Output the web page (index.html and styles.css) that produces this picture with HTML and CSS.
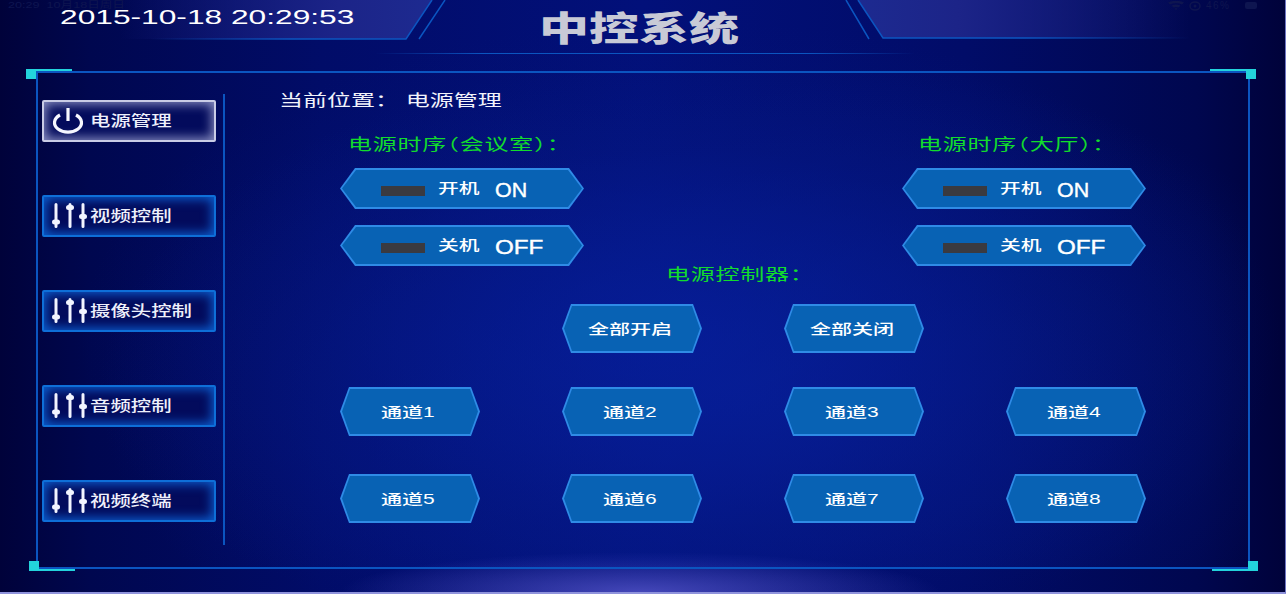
FILE: index.html
```html
<!DOCTYPE html>
<html lang="zh">
<head>
<meta charset="utf-8">
<title>中控系统</title>
<link rel="stylesheet" href="styles.css">
</head>
<body>
<svg class="defs" width="0" height="0" aria-hidden="true">
  <symbol id="sliders" viewBox="0 0 36 26">
    <path d="M4 1.500V23.500M18 1.500V23.500M31 1.500V23.500" stroke="#f2f4ff" stroke-width="3" stroke-linecap="round" fill="none"/>
    <rect x="0" y="16.500" width="8" height="5" rx="2.500" fill="#f2f4ff"/>
    <rect x="14" y="2" width="8" height="5" rx="2.500" fill="#f2f4ff"/>
    <rect x="27" y="11" width="8" height="5" rx="2.500" fill="#f2f4ff"/>
  </symbol>
</svg>
<div class="glow"></div>
<svg class="deco" width="1286" height="60" viewBox="0 0 1286 60" aria-hidden="true">
  <defs>
    <linearGradient id="lt" x1="0" x2="1" y1="0" y2="0">
      <stop offset="0" stop-color="#1c2488" stop-opacity="0"/>
      <stop offset="0.7" stop-color="#1c2488"/>
      <stop offset="1" stop-color="#1d2a90"/>
    </linearGradient>
    <linearGradient id="rt" x1="1" x2="0" y1="0" y2="0">
      <stop offset="0" stop-color="#1c2488" stop-opacity="0"/>
      <stop offset="0.7" stop-color="#1c2488"/>
      <stop offset="1" stop-color="#1d2a90"/>
    </linearGradient>
    <linearGradient id="ll" x1="0" x2="1" y1="0" y2="0">
      <stop offset="0" stop-color="#0b55c0" stop-opacity="0"/>
      <stop offset="0.5" stop-color="#0b55c0"/>
      <stop offset="1" stop-color="#0b55c0"/>
    </linearGradient>
    <linearGradient id="lr" x1="1" x2="0" y1="0" y2="0">
      <stop offset="0" stop-color="#0b55c0" stop-opacity="0"/>
      <stop offset="0.5" stop-color="#0b55c0"/>
      <stop offset="1" stop-color="#0b55c0"/>
    </linearGradient>
    <linearGradient id="lm" x1="0" x2="1" y1="0" y2="0">
      <stop offset="0" stop-color="#0b55c0" stop-opacity="0"/>
      <stop offset="0.2" stop-color="#0b55c0"/>
      <stop offset="0.8" stop-color="#0b55c0"/>
      <stop offset="1" stop-color="#0b55c0" stop-opacity="0"/>
    </linearGradient>
  </defs>
  <polygon points="120,0 432,0 406,39 120,39" fill="url(#lt)"/>
  <polygon points="858,0 1190,0 1190,38 883,38" fill="url(#rt)"/>
  <path d="M150 39H406L432 0" fill="none" stroke="url(#ll)" stroke-width="1.5"/>
  <path d="M858 0L883 38H1190" fill="none" stroke="url(#lr)" stroke-width="1.5"/>
  <path d="M419 39L445 0M846 0L869 39" fill="none" stroke="#0b55c0" stroke-width="1.5"/>
  <rect x="375" y="53" width="540" height="1" fill="url(#lm)"/>
</svg>
<div class="status status-left"><span class="st-text">20:29&nbsp;&nbsp;10月18日周日</span></div>
<div class="status status-right">
  <svg width="16" height="9" viewBox="0 0 16 9" aria-hidden="true"><path d="M0 1.500Q8-2 16 1.500L14 3.500Q8 1 2 3.500ZM3.500 4.500Q8 2.500 12.500 4.500L10.500 6.500Q8 5.500 5.500 6.500ZM6.500 7.500L8 9L9.500 7.500Q8 7 6.500 7.500Z" fill="#0e1550"/></svg>
  <svg width="12" height="10" viewBox="0 0 12 10" aria-hidden="true"><ellipse cx="6" cy="5" rx="5" ry="4" fill="none" stroke="#0e1550" stroke-width="1.500"/><circle cx="6" cy="5" r="1.500" fill="#0e1550"/></svg>
  <span class="st-batt">46%</span>
  <span class="battery"></span>
</div>

<header class="top">
  <div class="date"><span class="date-text">2015-10-18 20:29:53</span></div>
  <h1 class="title"><span class="title-text">中控系统</span></h1>
</header>

<main class="panel">
  <i class="corner c-tl"></i><i class="corner c-tr"></i><i class="corner c-bl"></i><i class="corner c-br"></i>
  <nav class="side">
    <a class="menu active">
      <svg class="ico" width="36" height="26" viewBox="0 0 36 26" aria-hidden="true">
        <path d="M8 7A13.500 9.500 0 1 0 24 7" fill="none" stroke="#f6f7ff" stroke-width="3.200"/>
        <path d="M16 0V13" stroke="#f6f7ff" stroke-width="3.200" fill="none"/>
      </svg>
      <span class="menu-text">电源管理</span>
    </a>
    <a class="menu"><svg class="ico" width="36" height="26"><use href="#sliders"/></svg><span class="menu-text">视频控制</span></a>
    <a class="menu"><svg class="ico" width="36" height="26"><use href="#sliders"/></svg><span class="menu-text">摄像头控制</span></a>
    <a class="menu"><svg class="ico" width="36" height="26"><use href="#sliders"/></svg><span class="menu-text">音频控制</span></a>
    <a class="menu"><svg class="ico" width="36" height="26"><use href="#sliders"/></svg><span class="menu-text">视频终端</span></a>
  </nav>
  <section class="content">
    <div class="crumb"><span class="crumb-text">当前位置： 电源管理</span></div>
    <div class="seq">
      <div class="seq-col">
        <div class="green g-left"><span class="green-text">电源时序（会议室）：</span></div>
        <button class="hex hex-power"><b class="bar"></b><span class="lab">开机</span><span class="val">ON</span></button>
        <button class="hex hex-power"><b class="bar"></b><span class="lab">关机</span><span class="val val-off">OFF</span></button>
      </div>
      <div class="seq-col">
        <div class="green g-right"><span class="green-text">电源时序（大厅）：</span></div>
        <button class="hex hex-power"><b class="bar"></b><span class="lab">开机</span><span class="val">ON</span></button>
        <button class="hex hex-power"><b class="bar"></b><span class="lab">关机</span><span class="val val-off">OFF</span></button>
      </div>
    </div>
    <div class="green g-center"><span class="green-text">电源控制器：</span></div>
    <div class="grid all-row">
      <button class="hex hex-ch col2"><span class="ch-text">全部开启</span></button>
      <button class="hex hex-ch"><span class="ch-text">全部关闭</span></button>
    </div>
    <div class="grid channels">
      <button class="hex hex-ch"><span class="ch-text">通道1</span></button>
      <button class="hex hex-ch"><span class="ch-text">通道2</span></button>
      <button class="hex hex-ch"><span class="ch-text">通道3</span></button>
      <button class="hex hex-ch"><span class="ch-text">通道4</span></button>
      <button class="hex hex-ch"><span class="ch-text">通道5</span></button>
      <button class="hex hex-ch"><span class="ch-text">通道6</span></button>
      <button class="hex hex-ch"><span class="ch-text">通道7</span></button>
      <button class="hex hex-ch"><span class="ch-text">通道8</span></button>
    </div>
  </section>
</main>
</body>
</html>
```
FILE: styles.css
```css
* { box-sizing: border-box; }
html, body { margin: 0; padding: 0; }
body {
  position: relative;
  width: 1286px;
  height: 594px;
  overflow: hidden;
  font-family: "Liberation Sans", "Noto Sans CJK SC", sans-serif;
  color: #fff;
  background:
    radial-gradient(ellipse 600px 320px at 680px 340px, rgba(6,28,150,.75) 0%, rgba(4,20,120,.45) 60%, rgba(4,16,110,0) 100%),
    linear-gradient(90deg, #00023a 0%, #00074f 7%, #010c68 25%, #02107a 50%, #010c68 75%, #00074f 93%, #00023a 100%);
  border-bottom: 2px solid #8f93dc;
  border-right: 1px solid #6f76c4;
}
.defs { position: absolute; }
.glow {
  position: absolute;
  left: 340px;
  bottom: 0;
  width: 600px;
  height: 40px;
  background: radial-gradient(ellipse 300px 40px at center bottom, rgba(84,84,200,.8), rgba(60,60,170,0) 100%);
}
.deco { position: absolute; left: 0; top: 0; }

.status { position: absolute; top: 1px; display: flex; align-items: center; gap: 5px; height: 9px; line-height: 9px; color: #0e1550; font-size: 9px; white-space: nowrap; }
.status-left { left: 8px; }
.status-right { left: 1168px; }
.st-text { display: inline-block; transform: scaleX(1.4); transform-origin: left center; }
.st-batt { display: inline-block; width: 34px; font-size: 10px; letter-spacing: 1.5px; }
.battery { display: inline-block; width: 12px; height: 7px; background: #0e1550; border-radius: 2px; }

.top {
  position: relative;
  display: grid;
  grid-template-columns: 540px 198px 1fr;
  height: 71px;
}
.date { padding: 10px 0 0 60px; line-height: 14px; font-size: 20px; white-space: nowrap; }
.date-text { display: inline-block; transform: scaleX(1.585); transform-origin: left center; }
.title { margin: 0; padding-top: 9px; font-size: 34px; line-height: 40px; font-weight: 900; color: #c8cad6; text-align: center; white-space: nowrap; }
.title-text { display: inline-block; transform: scaleX(1.47); transform-origin: center; }

.panel {
  position: relative;
  display: flex;
  align-items: flex-start;
  width: 1214px;
  height: 498px;
  margin-left: 36px;
  border: 2px solid #0b55c0;
  padding-left: 4px;
  background:
    radial-gradient(ellipse 640px 340px at 700px 320px, rgba(7,32,156,.65), rgba(6,20,120,0) 100%);
}
.corner { position: absolute; width: 46px; height: 10px; }
.corner::before { content: ""; position: absolute; width: 10px; height: 10px; background: #23d3dc; }
.corner::after { content: ""; position: absolute; width: 46px; height: 2px; background: #23d3dc; }
.c-tl { left: -12px; top: -4px; }
.c-tl::after { top: 0; left: 0; }
.c-tr { right: -8px; top: -4px; }
.c-tr::before { right: 0; }
.c-tr::after { right: 0; top: 0; }
.c-bl { left: -9px; bottom: -4px; }
.c-bl::after { bottom: 0; left: 0; }
.c-br { right: -10px; bottom: -4px; }
.c-br::before { right: 0; }
.c-br::after { right: 0; bottom: 0; }

.side {
  flex: none;
  width: 183px;
  height: 451px;
  margin-top: 21px;
  padding: 6px 0 0;
  display: flex;
  flex-direction: column;
  gap: 53px;
  border-right: 2px solid #0b55c0;
}
.menu {
  display: flex;
  align-items: center;
  width: 174px;
  height: 42px;
  padding-left: 8px;
  border: 2px solid #0e6fd8;
  border-radius: 2px;
  background: #030b5c;
  box-shadow: inset 0 0 11px 2px #0c5fd0;
}
.menu.active {
  border-color: #c9cce6;
  box-shadow: inset 0 0 11px 2px #8d92c4;
}
.ico { flex: none; }
.menu-text {
  margin-left: 2px;
  font-size: 15px;
  line-height: 20px;
  font-weight: 500;
  white-space: nowrap;
  color: #eef0fb;
  display: inline-block;
  transform: scaleX(1.36);
  transform-origin: left center;
}

.content { flex: none; width: 921px; padding: 18px 0 0 115px; }
.crumb { margin-left: -61px; height: 20px; line-height: 20px; font-size: 16px; white-space: nowrap; color: #f2f3fb; }
.crumb-text { display: inline-block; transform: scaleX(1.5); transform-origin: left center; }
.seq { display: flex; justify-content: space-between; width: 806px; margin-top: 25px; }
.seq-col { width: 244px; display: flex; flex-direction: column; }
.green { height: 18px; line-height: 18px; font-size: 16px; letter-spacing: .5px; color: #12dc2c; white-space: nowrap; font-feature-settings: "halt"; }
.green-text { display: inline-block; transform: scaleX(1.5); transform-origin: left center; }
.g-left { margin-left: 8px; margin-bottom: 14px; }
.g-right { margin-left: 16px; margin-bottom: 14px; }
.g-center { margin: 0 0 0 326px; }

.hex {
  position: relative;
  display: flex;
  align-items: center;
  padding: 0;
  border: 0;
  color: #fff;
  font-family: inherit;
  background: #2f8be6;
  isolation: isolate;
}
.hex::before {
  content: "";
  position: absolute;
  z-index: -1;
  inset: 2px;
  background: #0862b4;
}
.hex-power {
  width: 244px;
  height: 41px;
  padding-left: 41px;
  margin-bottom: 16px;
  clip-path: polygon(0 50%, 15px 0, calc(100% - 15px) 0, 100% 50%, calc(100% - 15px) 100%, 15px 100%);
}
.hex-power::before {
  clip-path: polygon(0 50%, 14px 0, calc(100% - 14px) 0, 100% 50%, calc(100% - 14px) 100%, 14px 100%);
}
.hex-power:last-child { margin-bottom: 0; }
.bar { flex: none; width: 44px; height: 10px; margin-top: 4px; background: #3a3a40; }
.lab {
  flex: none;
  width: 42px;
  margin-left: 13px;
  margin-top: -1px;
  font-size: 14px;
  line-height: 18px;
  font-weight: 500;
  text-align: left;
  white-space: nowrap;
  display: inline-block;
  transform: scaleX(1.48);
  transform-origin: left center;
}
.val {
  margin-left: 15px;
  margin-top: 2px;
  font-size: 20px;
  line-height: 24px;
  white-space: nowrap;
  display: inline-block;
  -webkit-text-stroke: .4px #fff;
  transform: scaleX(1.07);
  transform-origin: left center;
}
.val-off { transform: scaleX(1.21); }
.grid { display: grid; grid-template-columns: repeat(4, 140px); column-gap: 82px; }
.all-row { margin-top: 20px; }
.col2 { grid-column: 2; }
.channels { margin-top: 34px; row-gap: 38px; }
.hex-ch {
  width: 140px;
  height: 49px;
  padding-right: 5px;
  justify-content: center;
  clip-path: polygon(0 50%, 9px 0, calc(100% - 9px) 0, 100% 50%, calc(100% - 9px) 100%, 9px 100%);
}
.hex-ch::before {
  clip-path: polygon(0 50%, 8px 0, calc(100% - 8px) 0, 100% 50%, calc(100% - 8px) 100%, 8px 100%);
}
.ch-text {
  font-size: 14px;
  line-height: 18px;
  font-weight: 500;
  white-space: nowrap;
  display: inline-block;
  transform: scaleX(1.5);
  transform-origin: center;
}
```
